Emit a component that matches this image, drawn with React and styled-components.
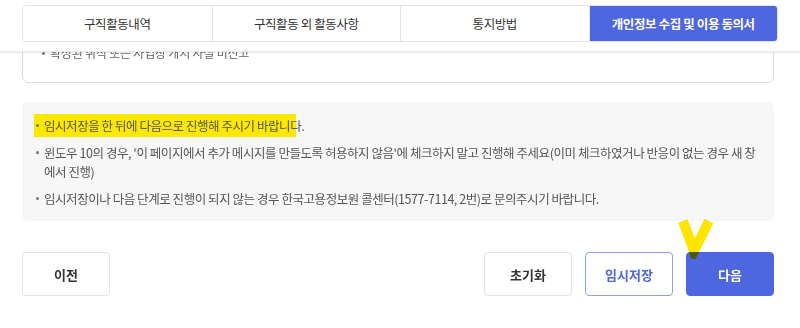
import React from 'react';
import styled, { createGlobalStyle } from 'styled-components';

const GlobalStyle = createGlobalStyle`
  * { box-sizing: border-box; }
  body {
    margin: 0;
    background: #fff;
    font-family: "Noto Sans CJK KR", "Noto Sans", sans-serif;
    color: #333;
  }
`;

const tabs = ['구직활동내역', '구직활동 외 활동사항', '통지방법', '개인정보 수집 및 이용 동의서'];

const App = () => {
  return (
    <Page>
      <GlobalStyle />
      <StickyHeader>
        <TabBar>
          {tabs.map((t, i) => (
            <Tab key={t} active={i === tabs.length - 1}>{t}</Tab>
          ))}
        </TabBar>
      </StickyHeader>

      <Body>
        <Card>
          <CardItem>확정된 취직 또는 사업장 개시 사실 미신고</CardItem>
        </Card>

        <Notice>
          <NoticeItem>
            <Marker>임시저장을 한 뒤에 다음으로 진행해 주시기 바랍니다</Marker>.
          </NoticeItem>
          <NoticeItem>
            윈도우 10의 경우, '이 페이지에서 추가 메시지를 만들도록 허용하지 않음'에 체크하지 말고 진행해 주세요(이미 체크하였거나 반응이 없는 경우 새 창에서 진행)
          </NoticeItem>
          <NoticeItem>
            임시저장이나 다음 단계로 진행이 되지 않는 경우 한국고용정보원 콜센터(1577-7114, 2번)로 문의주시기 바랍니다.
          </NoticeItem>
        </Notice>

        <ButtonRow>
          <Button>이전</Button>
          <ButtonGroup>
            <Button>초기화</Button>
            <Button variant="outline">임시저장</Button>
            <Button variant="primary">
              다음
              <Scribble width="40" height="40" viewBox="0 0 40 40">
                <polyline points="7,2 18,32 33,2" fill="none" stroke="#ffe500" strokeWidth="10" strokeLinejoin="miter" />
              </Scribble>
            </Button>
          </ButtonGroup>
        </ButtonRow>
      </Body>
    </Page>
  );
};

const Page = styled.div`
  width: 800px;
  height: 328px;
  overflow: hidden;
`;

const StickyHeader = styled.div`
  position: relative;
  z-index: 2;
  background: #fff;
  padding: 5px 22px 9px 22px;
  box-shadow: 0 1px 1px rgba(0, 0, 0, 0.08);
  border-bottom: 1px solid #ececec;
`;

const TabBar = styled.div`
  display: grid;
  grid-template-columns: repeat(4, 1fr);
  height: 37px;
  border: 1px solid #e3e3e3;
  border-radius: 4px;
  overflow: hidden;
`;

const Tab = styled.div`
  display: flex;
  align-items: center;
  justify-content: center;
  font-size: 12.5px;
  letter-spacing: -0.4px;
  color: ${({ active }) => (active ? '#fff' : '#333')};
  font-weight: ${({ active }) => (active ? 700 : 400)};
  background: ${({ active }) => (active ? '#4e66e0' : '#fff')};
  & + & {
    border-left: 1px solid #e6e6e6;
  }
`;

const Body = styled.div`
  padding: 0 26px 0 22px;
`;

const Card = styled.div`
  margin-top: -31px;
  border: 1px solid #dcdcdc;
  border-radius: 6px;
  padding: 22px 18px 20px 17px;
`;

const CardItem = styled.div`
  position: relative;
  padding-left: 10px;
  font-size: 12px;
  line-height: 18px;
  color: #666;
  letter-spacing: -0.2px;
  &::before {
    content: '';
    position: absolute;
    left: 2px;
    top: 8px;
    width: 3px;
    height: 3px;
    border-radius: 50%;
    background: #777;
  }
`;

const Notice = styled.ul`
  list-style: none;
  margin: 19px 0 0 0;
  padding: 14px 12px 13px 14px;
  background: #f7f7f7;
  border-radius: 6px;
  display: flex;
  flex-direction: column;
  gap: 8px;
`;

const NoticeItem = styled.li`
  position: relative;
  padding-left: 8px;
  font-size: 12.5px;
  line-height: 19px;
  color: #555;
  letter-spacing: -0.45px;
  &::before {
    content: '';
    position: absolute;
    left: 0;
    top: 8px;
    width: 3px;
    height: 3px;
    border-radius: 50%;
    background: #777;
  }
`;

const Marker = styled.span`
  background: linear-gradient(to right, #fbe800 calc(100% - 5px), transparent 0);
  margin-left: -10px;
  padding: 2px 0 2px 10px;
`;

const ButtonRow = styled.div`
  display: flex;
  justify-content: space-between;
  margin-top: 31px;
`;

const ButtonGroup = styled.div`
  display: flex;
  gap: 13px;
`;

const Button = styled.button`
  position: relative;
  width: 88px;
  height: 44px;
  border-radius: 4px;
  font-family: inherit;
  font-size: 13px;
  font-weight: 700;
  cursor: pointer;
  border: 1px solid
    ${({ variant }) => (variant === 'outline' ? '#8d9ef0' : variant === 'primary' ? '#4e66e0' : '#e2e2e2')};
  background: ${({ variant }) => (variant === 'primary' ? '#4e66e0' : '#fff')};
  color: ${({ variant }) => (variant === 'primary' ? '#fff' : variant === 'outline' ? '#4e66e0' : '#333')};
`;

const Scribble = styled.svg`
  position: absolute;
  left: -11px;
  top: -34px;
  mix-blend-mode: multiply;
  pointer-events: none;
`;

export default App;
